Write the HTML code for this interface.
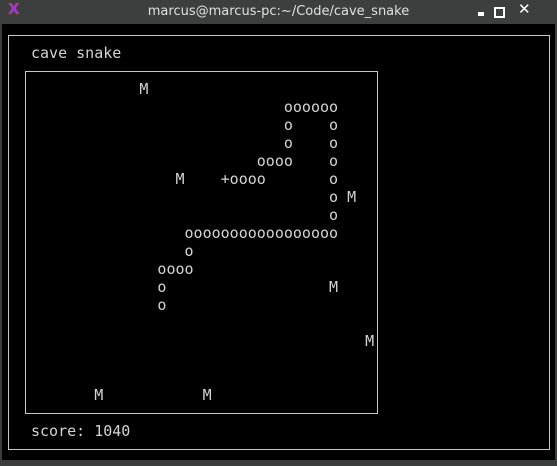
<!DOCTYPE html>
<html><head><style>
html,body{margin:0;padding:0;width:557px;height:466px;overflow:hidden;background:#3a3d3c}
#title{position:absolute;left:0;top:0;width:557px;height:24px;background:#3c3f3e;color:#e0e0e0;font:13px "DejaVu Sans","Liberation Sans",sans-serif;text-align:center;line-height:24px}
#term{position:absolute;left:2px;top:24px;width:553px;height:436px;background:#000}
.b{position:absolute;border:1px solid #c8c8c8}
.t{position:absolute;margin:0;font:15px "DejaVu Sans Mono","Liberation Mono",monospace;line-height:18px;color:#d4d4d4;white-space:pre}
.ic{position:absolute;top:0;height:24px;line-height:24px;color:#fff;font:bold 13px "DejaVu Sans",sans-serif}
</style></head><body>
<div id="title">marcus@marcus-pc:~/Code/cave_snake</div>
<div class="ic" style="left:8px;color:#9b3bd0;font-size:15px;text-shadow:0 0 1px #d33">X</div>
<div style="position:absolute;left:478px;top:12px;width:6px;height:4px;background:#fff"></div>
<div style="position:absolute;left:494px;top:7px;width:7px;height:7px;border:2px solid #fff"></div>
<div class="ic" style="left:518px;font-size:15px">✕</div>
<div id="term"></div>
<div class="b" style="left:8px;top:35px;width:540px;height:413px"></div>
<div class="b" style="left:25px;top:71px;width:351px;height:341px"></div>
<div class="t" style="left:31px;top:44px">cave snake</div>
<div class="t" style="left:31px;top:80px">            M</div>
<div class="t" style="left:31px;top:98px">                            oooooo</div>
<div class="t" style="left:31px;top:116px">                            o    o</div>
<div class="t" style="left:31px;top:134px">                            o    o</div>
<div class="t" style="left:31px;top:152px">                         oooo    o</div>
<div class="t" style="left:31px;top:170px">                M    +oooo       o</div>
<div class="t" style="left:31px;top:188px">                                 o M</div>
<div class="t" style="left:31px;top:206px">                                 o</div>
<div class="t" style="left:31px;top:224px">                 ooooooooooooooooo</div>
<div class="t" style="left:31px;top:242px">                 o</div>
<div class="t" style="left:31px;top:260px">              oooo</div>
<div class="t" style="left:31px;top:278px">              o                  M</div>
<div class="t" style="left:31px;top:296px">              o</div>
<div class="t" style="left:31px;top:332px">                                     M</div>
<div class="t" style="left:31px;top:386px">       M           M</div>
<div class="t" style="left:31px;top:422px">score: 1040</div>
</body></html>
